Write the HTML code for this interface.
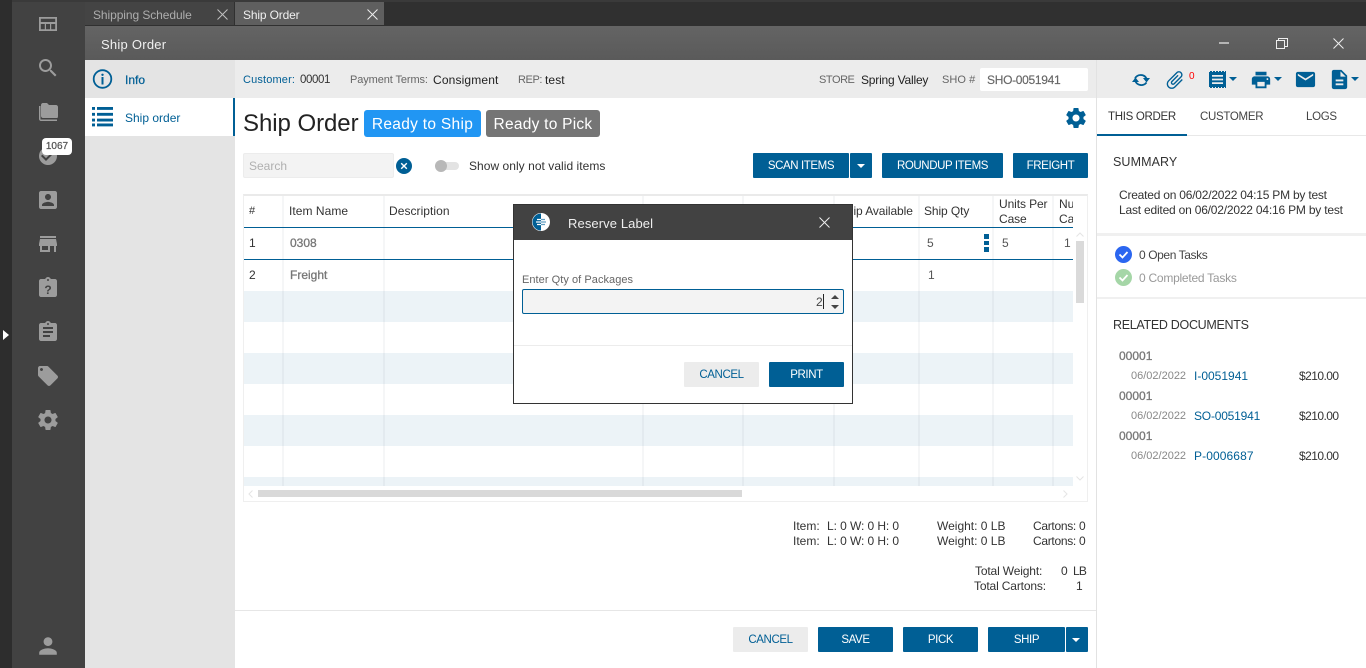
<!DOCTYPE html>
<html><head><meta charset="utf-8"><title>Ship Order</title>
<style>
html,body{margin:0;padding:0;width:1366px;height:668px;overflow:hidden;background:#fff}
body{font-family:"Liberation Sans",sans-serif;font-size:12px;color:#333;position:relative}
.t{position:absolute;white-space:nowrap;line-height:16px}
.b{position:absolute}
svg{position:absolute;display:block}
.btn{position:absolute;background:#005f95;color:#fff;height:25px;line-height:26px;text-align:center;border-radius:1px;font-size:11.500px;letter-spacing:-.4px;white-space:nowrap}
.g{fill:#9c9c9c}.bl{fill:#005f95}
.vl{position:absolute;width:2px;background:rgba(120,130,140,.07);top:196px;height:290px}
.st{position:absolute;left:244px;width:829px;height:31px;background:#ecf3f7}
.sb{-webkit-text-stroke:.3px #777;color:#777}
.pr{color:#333;letter-spacing:-.55px}
.tb{font-size:11.500px;letter-spacing:-.3px}
</style></head><body>
<!-- base -->
<div class="b" style="left:0;top:0;width:1366px;height:26px;background:#303030"></div>
<div class="b" style="left:0;top:0;width:1366px;height:2px;background:#3a3a3a"></div>
<div class="b" style="left:0;top:0;width:12px;height:668px;background:#2d2d2d"></div>
<div class="b" style="left:12px;top:2px;width:73px;height:666px;background:#424242"></div>
<svg style="left:3px;top:330px" width="6" height="10"><path d="M0 0l6 5-6 5z" fill="#fff"/></svg>
<!-- tabs -->
<div class="b" style="left:85px;top:2px;width:149px;height:23px;background:#444"></div>
<div class="b" style="left:235px;top:2px;width:149px;height:23px;background:#5f5f5f"></div>
<div class="t" style="left:93px;top:7px;color:#adadad;letter-spacing:-.08px">Shipping Schedule</div>
<div class="t" style="left:243px;top:7px;color:#f0f0f0;letter-spacing:-.15px">Ship Order</div>
<svg style="left:217px;top:9px" width="11" height="11"><path d="M.5.5l10 10M10.500.5l-10 10" stroke="#c0c0c0" fill="none"/></svg>
<svg style="left:367px;top:9px" width="11" height="11"><path d="M.5.5l10 10M10.500.5l-10 10" stroke="#eee" fill="none"/></svg>
<!-- title bar -->
<div class="b" style="left:85px;top:26px;width:1281px;height:34px;background:linear-gradient(#646464,#5a5a5a)"></div>
<div class="t" style="left:101px;top:37px;color:#f0f0f0;font-size:13px;letter-spacing:.25px">Ship Order</div>
<div class="b" style="left:1219px;top:42px;width:10px;height:2px;background:#b5b5b5"></div>
<svg style="left:1276px;top:38px" width="12" height="11"><path d="M.5 2.500h8v8h-8zM2.500 2.500v-2h9v8h-3" stroke="#eee" fill="none"/></svg>
<svg style="left:1333px;top:38px" width="11" height="11"><path d="M.5.5l10 10M10.500.5l-10 10" stroke="#eee" fill="none"/></svg>
<!-- left column -->
<div class="b" style="left:85px;top:60px;width:150px;height:608px;background:#e4e4e4"></div>
<div class="b" style="left:85px;top:98px;width:150px;height:38px;background:#fff"></div>
<div class="b" style="left:233px;top:98px;width:2px;height:38px;background:#005f95"></div>
<svg style="left:92px;top:69px" width="21" height="21"><circle cx="10.500" cy="10" r="8.800" fill="none" stroke="#005f95" stroke-width="1.800"/><circle cx="10.500" cy="5.800" r="1.200" fill="#005f95"/><rect x="9.500" y="8" width="2" height="7.500" fill="#005f95"/></svg>
<svg style="left:92px;top:107px" width="21" height="20"><path d="M0 0h3v3H0zM5 0h16v3H5zM0 6h3v3H0zM5 6h16v3H5zM0 12h3v3H0zM5 12h16v3H5zM0 17h3v3H0zM5 17h16v3H5z" fill="#005f95" transform="scale(1 .97)"/></svg>
<div class="t" style="left:125px;top:72px;color:#005f95;font-weight:400;-webkit-text-stroke:.25px #005f95">Info</div>
<div class="t" style="left:125px;top:110px;color:#005f95">Ship order</div>
<!-- rail icons -->
<svg style="left:36px;top:12px" width="24" height="24" class="g"><path d="M3 5h18v14H3zM4.800 6.800v3.200h14.400V6.800zM4.800 12v5.200h4V12zM10 12v5.200h4V12zM15.200 12v5.200h4V12z" fill-rule="evenodd"/></svg>
<svg style="left:36px;top:56px" width="24" height="24" class="g"><path d="M15.500 14h-.79l-.28-.27C15.410 12.590 16 11.110 16 9.500 16 5.910 13.090 3 9.500 3S3 5.910 3 9.500 5.910 16 9.500 16c1.610 0 3.090-.59 4.230-1.570l.27.28v.79l5 4.990L20.490 19l-4.990-5zm-6 0C7.010 14 5 11.990 5 9.500S7.010 5 9.500 5 14 7.010 14 9.500 11.990 14 9.500 14z"/></svg>
<svg style="left:36px;top:100px" width="24" height="24" class="g"><path d="M4 6H3v13c0 1.100.9 2 2 2h16v-1.500H4.500V6zM20 5h-7l-2-2H7c-1.100 0-2 .9-2 2v11c0 1.100.9 2 2 2h14c.6 0 1-.5 1-2V7c0-1.100-.9-2-2-2z"/></svg>
<svg style="left:36px;top:144px" width="24" height="24" class="g"><path d="M12 3a9 9 0 1 0 0 18 9 9 0 0 0 0-18zm-2 14l-5-5 1.410-1.410L10 14.170l7.590-7.590L19 8l-9 9z"/></svg>
<div class="b" style="left:42px;top:138px;width:30px;height:17px;background:#fff;border-radius:4px"></div>
<div class="t" style="left:42px;top:139px;width:30px;text-align:center;font-size:10px;color:#555;-webkit-text-stroke:.25px #555;line-height:16px">1067</div>
<svg style="left:36px;top:188px" width="24" height="24" class="g"><path d="M3 5v14c0 1.100.89 2 2 2h14c1.100 0 2-.9 2-2V5c0-1.100-.9-2-2-2H5c-1.110 0-2 .9-2 2zm12 4c0 1.660-1.340 3-3 3s-3-1.340-3-3 1.340-3 3-3 3 1.340 3 3zm-9 8c0-2 4-3.100 6-3.100s6 1.100 6 3.100v1H6v-1z"/></svg>
<svg style="left:36px;top:232px" width="24" height="24" class="g"><path d="M20 4H4v2h16V4zm1 10v-2l-1-5H4l-1 5v2h1v6h10v-6h4v6h2v-6h1zm-9 4H6v-4h6v4z"/></svg>
<svg style="left:36px;top:276px" width="24" height="24" class="g"><path d="M19 3h-4.180C14.400 1.840 13.300 1 12 1c-1.300 0-2.400.84-2.820 2H5c-1.100 0-2 .9-2 2v14c0 1.100.9 2 2 2h14c1.100 0 2-.9 2-2V5c0-1.100-.9-2-2-2zm-7 0c.55 0 1 .45 1 1s-.45 1-1 1-1-.45-1-1 .45-1 1-1z"/><text x="12" y="18" text-anchor="middle" font-family="Liberation Sans" font-size="12" font-weight="700" fill="#424242">?</text></svg>
<svg style="left:36px;top:320px" width="24" height="24" class="g"><path d="M19 3h-4.180C14.400 1.840 13.300 1 12 1c-1.300 0-2.400.84-2.820 2H5c-1.100 0-2 .9-2 2v14c0 1.100.9 2 2 2h14c1.100 0 2-.9 2-2V5c0-1.100-.9-2-2-2zm-7 0c.55 0 1 .45 1 1s-.45 1-1 1-1-.45-1-1 .45-1 1-1zm2 14H7v-2h7v2zm3-4H7v-2h10v2zm0-4H7V7h10v2z"/></svg>
<svg style="left:36px;top:364px" width="24" height="24" class="g"><path d="M21.410 11.580l-9-9C12.050 2.220 11.550 2 11 2H4c-1.100 0-2 .9-2 2v7c0 .55.22 1.050.59 1.420l9 9c.36.36.86.58 1.410.58.55 0 1.050-.22 1.410-.59l7-7c.37-.36.59-.86.59-1.410 0-.55-.23-1.060-.59-1.420zM5.500 7C4.670 7 4 6.330 4 5.500S4.670 4 5.500 4 7 4.670 7 5.500 6.330 7 5.500 7z"/></svg>
<svg style="left:36px;top:408px" width="24" height="24" class="g"><path d="M19.430 12.980c.04-.32.07-.64.07-.98s-.03-.66-.07-.98l2.110-1.650c.19-.15.24-.42.12-.64l-2-3.460c-.12-.22-.39-.3-.61-.22l-2.490 1c-.52-.4-1.080-.73-1.690-.98l-.38-2.650C14.460 2.180 14.250 2 14 2h-4c-.25 0-.46.18-.49.42l-.38 2.650c-.61.25-1.170.59-1.690.98l-2.490-1c-.23-.09-.49 0-.61.22l-2 3.460c-.13.22-.07.49.12.64l2.110 1.650c-.04.32-.07.65-.07.98s.03.66.07.98l-2.110 1.650c-.19.15-.24.42-.12.64l2 3.460c.12.22.39.3.61.22l2.490-1c.52.4 1.080.73 1.690.98l.38 2.650c.03.24.24.42.49.42h4c.25 0 .46-.18.49-.42l.38-2.650c.61-.25 1.170-.59 1.690-.98l2.490 1c.23.09.49 0 .61-.22l2-3.460c.12-.22.07-.49-.12-.64l-2.110-1.650zM12 15.500c-1.930 0-3.500-1.570-3.500-3.500s1.570-3.500 3.500-3.500 3.500 1.570 3.500 3.500-1.570 3.500-3.500 3.500z"/></svg>
<svg style="left:36px;top:634px" width="24" height="24" class="g"><path d="M12 12c2.210 0 4-1.790 4-4s-1.790-4-4-4-4 1.790-4 4 1.790 4 4 4zm0 2c-2.670 0-8 1.340-8 4v2h16v-2c0-2.660-5.330-4-8-4z" transform="translate(-1.200 -1.200) scale(1.100)"/></svg>
<!-- info bar -->
<div class="b" style="left:235px;top:60px;width:1131px;height:38px;background:#ececec"></div>
<div class="t" style="left:243px;top:72px;color:#005f95;font-size:11px;letter-spacing:.15px">Customer:</div>
<div class="t" style="left:300px;top:72px;color:#333;font-size:11.500px;letter-spacing:-.4px">00001</div>
<div class="t" style="left:350px;top:72px;color:#666;font-size:11px;letter-spacing:-.1px">Payment Terms:</div>
<div class="t" style="left:433px;top:72px;color:#222;letter-spacing:.15px">Consigment</div>
<div class="t" style="left:518px;top:72px;color:#666;font-size:11px;letter-spacing:-.4px">REP:</div>
<div class="t" style="left:545px;top:72px;color:#222;letter-spacing:.1px">test</div>
<div class="t" style="left:819px;top:72px;color:#666;font-size:11px;letter-spacing:-.45px">STORE</div>
<div class="t" style="left:861px;top:72px;color:#222;letter-spacing:-.2px">Spring Valley</div>
<div class="t" style="left:942px;top:72px;color:#666;font-size:11px;letter-spacing:.05px">SHO #</div>
<div class="b" style="left:980px;top:68px;width:108px;height:23px;background:#fff;border-radius:2px"></div>
<div class="t" style="left:987px;top:72px;color:#666;letter-spacing:-.3px;-webkit-text-stroke:.15px #666">SHO-0051941</div>
<!-- heading -->
<div class="t" style="left:243px;top:109px;font-size:24px;line-height:30px;color:#222;letter-spacing:-.05px">Ship Order</div>
<div class="b" style="left:364px;top:110px;width:117px;height:27px;background:#2196f3;border-radius:3px;color:#fff;font-size:15.500px;letter-spacing:.3px;line-height:29px;text-align:center;white-space:nowrap">Ready to Ship</div>
<div class="b" style="left:486px;top:110px;width:114px;height:27px;background:#757575;border-radius:3px;color:#fff;font-size:15.500px;letter-spacing:.25px;line-height:29px;text-align:center;white-space:nowrap">Ready to Pick</div>
<svg style="left:1064px;top:106px" width="24" height="24" class="bl"><path d="M19.430 12.980c.04-.32.07-.64.07-.98s-.03-.66-.07-.98l2.110-1.650c.19-.15.24-.42.12-.64l-2-3.460c-.12-.22-.39-.3-.61-.22l-2.490 1c-.52-.4-1.080-.73-1.690-.98l-.38-2.650C14.460 2.180 14.250 2 14 2h-4c-.25 0-.46.18-.49.42l-.38 2.650c-.61.25-1.170.59-1.690.98l-2.490-1c-.23-.09-.49 0-.61.22l-2 3.460c-.13.22-.07.49.12.64l2.110 1.650c-.04.32-.07.65-.07.98s.03.66.07.98l-2.110 1.650c-.19.15-.24.42-.12.64l2 3.460c.12.22.39.3.61.22l2.490-1c.52.4 1.080.73 1.690.98l.38 2.650c.03.24.24.42.49.42h4c.25 0 .46-.18.49-.42l.38-2.650c.61-.25 1.170-.59 1.690-.98l2.490 1c.23.09.49 0 .61-.22l2-3.460c.12-.22.07-.49-.12-.64l-2.110-1.650zM12 15.500c-1.930 0-3.500-1.570-3.500-3.500s1.570-3.500 3.500-3.500 3.500 1.570 3.500 3.500-1.570 3.500-3.500 3.500z"/></svg>
<!-- toolbar -->
<div class="b" style="left:243px;top:153px;width:149px;background:#f3f3f3;border:1px solid #ececec;box-sizing:content-box;border-radius:2px;height:23px"></div>
<div class="t" style="left:249px;top:158px;color:#b0b0b0;font-size:12px">Search</div>
<svg style="left:396px;top:158px" width="16" height="16"><circle cx="8" cy="8" r="8" fill="#005f95"/><path d="M5.200 5.200l5.600 5.600M10.800 5.200l-5.600 5.600" stroke="#fff" stroke-width="1.400"/></svg>
<div class="b" style="left:435px;top:162px;width:24px;height:8px;background:#e3e3e3;border-radius:4px"></div>
<div class="b" style="left:435px;top:160px;width:12px;height:12px;background:#b8b8b8;border-radius:50%"></div>
<div class="t" style="left:469px;top:158px;color:#333;letter-spacing:.04px">Show only not valid items</div>
<div class="btn" style="left:753px;top:153px;width:96px">SCAN ITEMS</div>
<div class="btn" style="left:850px;top:153px;width:22px"></div>
<svg style="left:857px;top:164px" width="9" height="5"><path d="M0 0h8l-4 4z" fill="#fff"/></svg>
<div class="btn" style="left:882px;top:153px;width:121px">ROUNDUP ITEMS</div>
<div class="btn" style="left:1013px;top:153px;width:75px">FREIGHT</div>
<!-- table -->
<div class="b" style="left:243px;top:194px;width:845px;height:308px;box-sizing:border-box;border:1px solid #efefef;border-top:2px solid #eaeaea"></div>
<div class="st" style="top:291px"></div>
<div class="st" style="top:353px"></div>
<div class="st" style="top:415px"></div>
<div class="st" style="top:477px;height:9px"></div>
<div class="vl" style="left:282px"></div>
<div class="vl" style="left:383px"></div>
<div class="vl" style="left:642px"></div>
<div class="vl" style="left:742px"></div>
<div class="vl" style="left:833px"></div>
<div class="vl" style="left:918px"></div>
<div class="vl" style="left:992px"></div>
<div class="vl" style="left:1052px"></div>
<div class="b" style="left:244px;top:227px;width:829px;height:1px;background:#005f95"></div>
<div class="b" style="left:244px;top:259px;width:829px;height:1px;background:#005f95"></div>
<div class="t" style="left:249px;top:203px;color:#333;font-size:11px">#</div>
<div class="t" style="left:289px;top:203px;color:#333;letter-spacing:.05px">Item Name</div>
<div class="t" style="left:389px;top:203px;color:#333;letter-spacing:.05px">Description</div>
<div class="t" style="left:839px;top:203px;color:#333;letter-spacing:-.1px">Ship Available</div>
<div class="t" style="left:924px;top:203px;color:#333;letter-spacing:-.1px">Ship Qty</div>
<div class="t" style="left:999px;top:196px;color:#333;letter-spacing:-.1px">Units Per</div>
<div class="t" style="left:999px;top:211px;color:#333;letter-spacing:-.1px">Case</div>
<div style="position:absolute;left:1059px;top:196px;width:14px;height:31px;overflow:hidden">
<div class="t" style="left:0;top:0">Number</div><div class="t" style="left:0;top:15px">Cases</div></div>
<div class="t" style="left:249px;top:235px;color:#333">1</div>
<div class="t sb" style="left:290px;top:235px">0308</div>
<div class="t" style="left:927px;top:235px;color:#555">5</div>
<div class="b" style="left:984px;top:234px;width:5px;height:5px;background:#005f95"></div>
<div class="b" style="left:984px;top:241px;width:5px;height:4px;background:#005f95"></div>
<div class="b" style="left:984px;top:247px;width:5px;height:5px;background:#005f95"></div>
<div class="t" style="left:1002px;top:235px;color:#555">5</div>
<div class="t" style="left:1064px;top:235px;color:#555">1</div>
<div class="t" style="left:249px;top:267px;color:#333">2</div>
<div class="t sb" style="left:290px;top:267px">Freight</div>
<div class="t" style="left:928px;top:267px;color:#555">1</div>
<!-- scrollbars -->
<div class="b" style="left:1076px;top:241px;width:8px;height:62px;background:#dadada"></div>
<svg style="left:1076px;top:232px" width="8" height="5"><path d="M.5 4.500L4 1l3.500 3.500" stroke="#e5e5e5" fill="none"/></svg>
<svg style="left:1076px;top:476px" width="8" height="5"><path d="M.5.5L4 4 7.500.5" stroke="#e5e5e5" fill="none"/></svg>
<div class="b" style="left:258px;top:490px;width:484px;height:7px;background:#d9d9d9"></div>
<svg style="left:248px;top:490px" width="5" height="8"><path d="M4.500.5L1 4l3.500 3.500" stroke="#e5e5e5" fill="none"/></svg>
<svg style="left:1063px;top:490px" width="5" height="8"><path d="M.5.5L4 4 .5 7.500" stroke="#e5e5e5" fill="none"/></svg>
<!-- totals -->
<div class="t" style="left:793px;top:518px;color:#333">Item:</div><div class="t" style="left:827px;top:518px;color:#333;letter-spacing:-.08px">L: 0 W: 0 H: 0</div>
<div class="t" style="left:793px;top:533px;color:#333">Item:</div><div class="t" style="left:827px;top:533px;color:#333;letter-spacing:-.08px">L: 0 W: 0 H: 0</div>
<div class="t" style="left:937px;top:518px;color:#333">Weight: 0 LB</div>
<div class="t" style="left:937px;top:533px;color:#333">Weight: 0 LB</div>
<div class="t" style="left:1033px;top:518px;color:#333;letter-spacing:-.3px">Cartons: 0</div>
<div class="t" style="left:1033px;top:533px;color:#333;letter-spacing:-.3px">Cartons: 0</div>
<div class="t" style="left:975px;top:563px;color:#333;letter-spacing:-.15px">Total Weight:</div>
<div class="t" style="left:1061px;top:563px;color:#333">0</div>
<div class="t" style="left:1073px;top:563px;color:#333;letter-spacing:-.8px">LB</div>
<div class="t" style="left:974px;top:578px;color:#333;letter-spacing:-.15px">Total Cartons:</div>
<div class="t" style="left:1076px;top:578px;color:#333">1</div>
<!-- footer -->
<div class="b" style="left:235px;top:610px;width:861px;height:1px;background:#e6e6e6"></div>
<div class="btn" style="left:733px;top:627px;width:75px;background:#ececec;color:#005f95">CANCEL</div>
<div class="btn" style="left:818px;top:627px;width:75px">SAVE</div>
<div class="btn" style="left:903px;top:627px;width:75px">PICK</div>
<div class="btn" style="left:988px;top:627px;width:77px">SHIP</div>
<div class="btn" style="left:1066px;top:627px;width:22px"></div>
<svg style="left:1072px;top:638px" width="9" height="5"><path d="M0 0h8l-4 4z" fill="#fff"/></svg>
<!-- right panel -->
<div class="b" style="left:1096px;top:60px;width:1px;height:608px;background:#e2e2e2"></div>
<svg style="left:1132px;top:72px" width="18" height="16"><path d="M3 6.500A6.500 6.500 0 0 1 14.500 6.500M14.500 10.500A6.500 6.500 0 0 1 3.500 9.500" stroke="#005f95" stroke-width="1.800" fill="none"/><path d="M11 6h7l-3.500 4.500zM0 10h7L3.500 5.500z" fill="#005f95"/></svg>
<svg style="left:1164px;top:69px" width="22" height="22" viewBox="0 0 24 24" class="bl"><path transform="rotate(45 12 12)" d="M16.500 6v11.500c0 2.210-1.790 4-4 4s-4-1.790-4-4V5c0-1.380 1.120-2.500 2.500-2.500s2.500 1.120 2.500 2.500v10.500c0 .55-.45 1-1 1s-1-.45-1-1V6H10v9.500c0 1.380 1.120 2.500 2.500 2.500s2.500-1.120 2.500-2.500V5c0-2.210-1.790-4-4-4S7 2.790 7 5v12.500c0 3.040 2.460 5.500 5.500 5.500s5.500-2.460 5.500-5.500V6h-1.500z"/></svg>
<div class="t" style="left:1189px;top:69px;color:#f00;font-size:10px">0</div>
<svg style="left:1209px;top:71px" width="17" height="17"><path d="M0 0h17v17H0z" fill="#005f95"/><path d="M3 4h11v1.800H3zM3 7.600h11v1.800H3zM3 11.200h11V13H3z" fill="#ececec"/><path d="M0 .5h17M0 16.500h17" stroke="#ececec" stroke-width="1" stroke-dasharray="1 2"/></svg>
<svg style="left:1229px;top:77px" width="9" height="5"><path d="M0 0h8l-4 4z" fill="#005f95"/></svg>
<svg style="left:1250px;top:69px" width="22" height="22" viewBox="0 0 24 24" class="bl"><path d="M19 8H5c-1.660 0-3 1.340-3 3v6h4v4h12v-4h4v-6c0-1.660-1.340-3-3-3zm-3 11H8v-5h8v5zm3-7c-.55 0-1-.45-1-1s.45-1 1-1 1 .45 1 1-.45 1-1 1zm-1-9H6v4h12V3z"/></svg>
<svg style="left:1274px;top:77px" width="9" height="5"><path d="M0 0h8l-4 4z" fill="#005f95"/></svg>
<svg style="left:1294px;top:68px" width="23" height="23" viewBox="0 0 24 24" class="bl"><path d="M20 4H4c-1.100 0-1.990.9-1.990 2L2 18c0 1.100.9 2 2 2h16c1.100 0 2-.9 2-2V6c0-1.100-.9-2-2-2zm0 4l-8 5-8-5V6l8 5 8-5v2z"/></svg>
<svg style="left:1328px;top:68px" width="23" height="23" viewBox="0 0 24 24" class="bl"><path d="M14 2H6c-1.100 0-1.990.9-1.990 2L4 20c0 1.100.89 2 1.990 2H18c1.100 0 2-.9 2-2V8l-6-6zm2 16H8v-2h8v2zm0-4H8v-2h8v2zm-3-5V3.500L18.500 9H13z"/></svg>
<svg style="left:1351px;top:77px" width="9" height="5"><path d="M0 0h8l-4 4z" fill="#005f95"/></svg>
<div class="b" style="left:1097px;top:135px;width:269px;height:1px;background:#e8e8e8"></div>
<div class="b" style="left:1097px;top:134px;width:90px;height:2px;background:#005f95"></div>
<div class="t tb" style="left:1108px;top:109px;color:#333">THIS ORDER</div>
<div class="t tb" style="left:1200px;top:109px;color:#444">CUSTOMER</div>
<div class="t tb" style="left:1306px;top:109px;color:#444">LOGS</div>
<div class="t" style="left:1113px;top:154px;color:#333;font-size:12.500px;letter-spacing:.1px">SUMMARY</div>
<div class="t" style="left:1119px;top:187px;color:#333;letter-spacing:-.22px">Created on 06/02/2022 04:15 PM by test</div>
<div class="t" style="left:1119px;top:202px;color:#333;letter-spacing:-.2px">Last edited on 06/02/2022 04:16 PM by test</div>
<div class="b" style="left:1097px;top:233px;width:269px;height:3px;background:#f0f0f0"></div>
<svg style="left:1115px;top:246px" width="17" height="17"><circle cx="8.500" cy="8.500" r="8.500" fill="#2b66f0"/><path d="M4.500 8.500l3 3 5-5.500" stroke="#fff" stroke-width="1.800" fill="none"/></svg>
<div class="t" style="left:1139px;top:247px;color:#444;letter-spacing:-.4px">0 Open Tasks</div>
<svg style="left:1115px;top:269px" width="17" height="17"><circle cx="8.500" cy="8.500" r="8.500" fill="#a5d6a7"/><path d="M4.500 8.500l3 3 5-5.500" stroke="#fff" stroke-width="1.800" fill="none"/></svg>
<div class="t" style="left:1139px;top:270px;color:#999;letter-spacing:-.25px">0 Completed Tasks</div>
<div class="b" style="left:1097px;top:297px;width:269px;height:2px;background:#f0f0f0"></div>
<div class="t" style="left:1113px;top:317px;color:#333;font-size:12.500px;letter-spacing:-.3px">RELATED DOCUMENTS</div>
<div class="t sb" style="left:1119px;top:348px">00001</div>
<div class="t" style="left:1131px;top:368px;color:#888;font-size:11px">06/02/2022</div>
<div class="t" style="left:1194px;top:368px;color:#005f95">I-0051941</div>
<div class="t pr" style="left:1299px;top:368px">$210.00</div>
<div class="t sb" style="left:1119px;top:388px">00001</div>
<div class="t" style="left:1131px;top:408px;color:#888;font-size:11px">06/02/2022</div>
<div class="t" style="left:1194px;top:408px;color:#005f95;letter-spacing:-.2px">SO-0051941</div>
<div class="t pr" style="left:1299px;top:408px">$210.00</div>
<div class="t sb" style="left:1119px;top:428px">00001</div>
<div class="t" style="left:1131px;top:448px;color:#888;font-size:11px">06/02/2022</div>
<div class="t" style="left:1194px;top:448px;color:#005f95;letter-spacing:.1px">P-0006687</div>
<div class="t pr" style="left:1299px;top:448px">$210.00</div>
<!-- modal -->
<div class="b" style="left:513px;top:204px;width:340px;height:200px;box-sizing:border-box;background:#fff;border:1px solid #333"></div>
<div class="b" style="left:514px;top:205px;width:338px;height:35px;background:#424242"></div>
<svg style="left:531px;top:212px" width="20" height="20"><circle cx="10" cy="10" r="9" fill="#fff"/><path d="M10 1.500a8.500 8.500 0 0 0 0 17z" fill="#005f95"/><path d="M6 7.500h4M5 10h5M6 12.500h4" stroke="#fff" stroke-width="1.200"/><path d="M10 7.500h4M10 10h5M10 12.500h4" stroke="#5f9dc0" stroke-width="1.200"/></svg>
<div class="t" style="left:568px;top:216px;color:#eee;font-size:13px;letter-spacing:.1px">Reserve Label</div>
<svg style="left:819px;top:217px" width="11" height="11"><path d="M.5.5l10 10M10.500.5l-10 10" stroke="#eee" fill="none"/></svg>
<div class="t" style="left:522px;top:272px;color:#666;font-size:11px;letter-spacing:.05px">Enter Qty of Packages</div>
<div class="b" style="left:522px;top:289px;width:322px;height:25px;box-sizing:border-box;background:#f3f3f3;border:1px solid #005f95;border-radius:2px"></div>
<div class="t" style="left:816px;top:294px;color:#444">2</div>
<div class="b" style="left:823px;top:294px;width:1px;height:15px;background:#222"></div>
<svg style="left:830px;top:294px" width="10" height="16"><path d="M1 5l4-4 4 4zM1 11h8l-4 4z" fill="#444"/></svg>
<div class="b" style="left:514px;top:345px;width:338px;height:1px;background:#ececec"></div>
<div class="btn" style="left:684px;top:362px;width:75px;background:#ececec;color:#005f95">CANCEL</div>
<div class="btn" style="left:769px;top:362px;width:75px">PRINT</div>
</body></html>
